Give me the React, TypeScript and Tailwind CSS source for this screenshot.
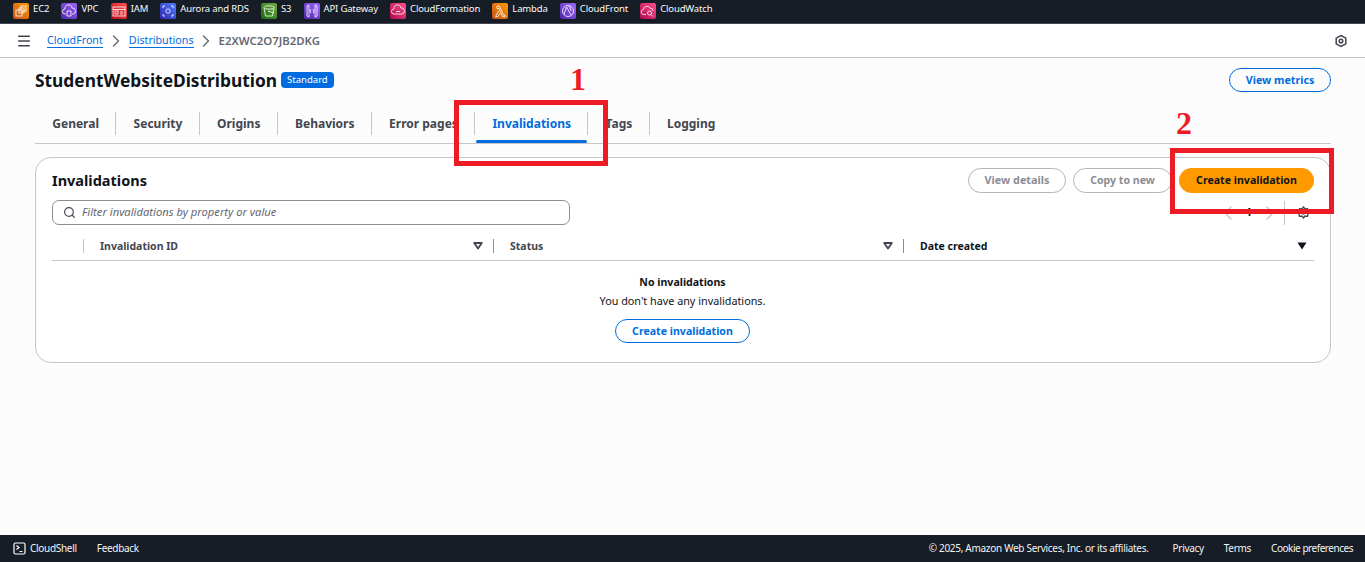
import { ChevronLeft, ChevronRight, Menu, Search } from "lucide-react";
import type { ReactNode } from "react";

const services: { name: string; bg: string; icon: ReactNode }[] = [
  {
    name: "EC2",
    bg: "bg-[linear-gradient(45deg,#c8511b,#ff9900)]",
    icon: (
      <>
        <rect x="3" y="7" width="6" height="6" />
        <rect x="6" y="5" width="5" height="5" />
        <rect x="8" y="3" width="5" height="5" />
      </>
    ),
  },
  {
    name: "VPC",
    bg: "bg-[linear-gradient(45deg,#4d27a8,#a166ff)]",
    icon: (
      <>
        <path d="M5 11H4a2.500 2.500 0 0 1 0-5 3.500 3.500 0 0 1 7-1 3 3 0 0 1 1 6h-1" />
        <path d="M6 8h4v5H6z" />
      </>
    ),
  },
  {
    name: "IAM",
    bg: "bg-[linear-gradient(45deg,#bd0816,#ff5252)]",
    icon: (
      <>
        <rect x="2" y="4" width="12" height="9" />
        <path d="M2 6.500h12" />
        <rect x="4" y="8" width="3" height="3" />
        <path d="M9 9h3M9 11h3" />
      </>
    ),
  },
  {
    name: "Aurora and RDS",
    bg: "bg-[linear-gradient(45deg,#2e27ad,#527fff)]",
    icon: (
      <>
        <rect x="6" y="6" width="4" height="4" rx="1.500" />
        <path d="M3 3h2M11 3h2M3 13h2M11 13h2M3 3v2M13 3v2M3 11v2M13 11v2" />
      </>
    ),
  },
  {
    name: "S3",
    bg: "bg-[linear-gradient(45deg,#1b660f,#6cae3e)]",
    icon: (
      <>
        <path d="M3 4.500 4.500 13h7L13 4.500" />
        <ellipse cx="8" cy="4.500" rx="5" ry="1.700" />
        <path d="m7 8 6 2" />
      </>
    ),
  },
  {
    name: "API Gateway",
    bg: "bg-[linear-gradient(45deg,#4d27a8,#a166ff)]",
    icon: <path d="M3 3v10l2 1V2zM13 3v10l-2 1V2zM7 6 6 8l1 2M9 6l1 2-1 2" />,
  },
  {
    name: "CloudFormation",
    bg: "bg-[linear-gradient(45deg,#b0084d,#ff4f8b)]",
    icon: <path d="M5 11H4a2.500 2.500 0 0 1 0-5 3.500 3.500 0 0 1 7-1 3 3 0 0 1 1 6H5zM6 8.500h4" />,
  },
  {
    name: "Lambda",
    bg: "bg-[linear-gradient(45deg,#c8511b,#ff9900)]",
    icon: <path d="M5 3h2.500l4 9H13v1.500h-2.500L7 5.500H5zM6.500 8 3.500 13.500h2.500L8 10" />,
  },
  {
    name: "CloudFront",
    bg: "bg-[linear-gradient(45deg,#4d27a8,#a166ff)]",
    icon: (
      <>
        <circle cx="8" cy="8" r="5.500" />
        <path d="M4 11.500 6.500 4M6.500 4 11 12M9.500 3 11 8" />
      </>
    ),
  },
  {
    name: "CloudWatch",
    bg: "bg-[linear-gradient(45deg,#b0084d,#ff4f8b)]",
    icon: (
      <>
        <path d="M6 11.500H4a2.500 2.500 0 0 1-.5-5A3.500 3.500 0 0 1 10 5a3 3 0 0 1 3 3" />
        <circle cx="9.500" cy="10" r="2" />
        <path d="m11 11.500 2 2" />
      </>
    ),
  },
];

const tabs = ["General", "Security", "Origins", "Behaviors", "Error pages", "Invalidations", "Tags", "Logging"];

function FilterCaret() {
  return (
    <svg width="10" height="8" viewBox="0 0 10 8" className="shrink-0">
      <path d="M1.200 1h7.600L5 6.600z" fill="none" stroke="#424650" strokeWidth="1.800" strokeLinejoin="round" />
    </svg>
  );
}

export default function App() {
  return (
    <div
      className="flex h-[562px] w-[1365px] flex-col overflow-hidden bg-[#fcfcfd] text-[12px] text-[#0f141a]"
      style={{ fontFamily: '"Noto Sans", sans-serif' }}
    >
      {/* service shortcuts */}
      <div className="flex h-6 shrink-0 items-start gap-[12.200px] border-b border-[#414750] bg-[#161d26] pl-[13px] pt-[2px]">
        {services.map((s) => (
          <div key={s.name} className="flex items-start gap-[4px] text-[9.500px] leading-[14px] tracking-[-0.15px] text-[#f9f9fa]">
            <span className={`mt-[1px] flex h-4 w-4 items-center justify-center rounded-[2px] ${s.bg}`}>
              <svg width="16" height="16" viewBox="0 0 16 16" fill="none" stroke="#fff" strokeWidth="0.9" opacity="0.9">
                {s.icon}
              </svg>
            </span>
            <span>{s.name}</span>
          </div>
        ))}
      </div>

      {/* breadcrumbs */}
      <div className="flex h-[34px] shrink-0 items-center border-b border-[#c6c6cd] bg-white pl-[16px] pr-[17px]">
        <Menu size={16} strokeWidth={2.2} className="text-[#424650]" />
        <a className="ml-[15px] border-b border-[#006ce0] text-[10.700px] leading-[14px] text-[#006ce0]">CloudFront</a>
        <ChevronRight size={20} strokeWidth={1.6} className="mx-[3px] text-[#656871]" />
        <a className="border-b border-[#006ce0] text-[10.700px] leading-[14px] text-[#006ce0]">Distributions</a>
        <ChevronRight size={20} strokeWidth={1.6} className="mx-[2.500px] text-[#656871]" />
        <span className="text-[11.400px] font-semibold text-[#656871]">E2XWC2O7JB2DKG</span>
        <svg width="14" height="14" viewBox="0 0 14 14" fill="none" stroke="#424650" className="ml-auto">
          <path d="M7 1.500 11.800 4.200v5.600L7 12.500 2.200 9.800V4.200z" strokeWidth="1.500" />
          <circle cx="7" cy="7" r="1.800" strokeWidth="1.500" />
        </svg>
      </div>

      <main className="flex-1 pl-[35px] pr-[34px]">
        <div className="flex items-center justify-between pt-[9px]">
          <div className="flex items-center gap-[4px]">
            <h1 className="text-[17.350px] leading-[26px] font-bold">StudentWebsiteDistribution</h1>
            <span className="rounded-[4px] bg-[#006ce0] px-[6px] text-[9.500px] leading-[16px] text-white">Standard</span>
          </div>
          <button className="h-6 w-[102px] rounded-full border border-[#006ce0] text-[10.700px] font-bold text-[#006ce0]">
            View metrics
          </button>
        </div>

        {/* tabs */}
        <div className="mt-[11px] flex h-[40px] border-b border-[#c6c6cd]">
          {tabs.map((tab, i) => (
            <div key={tab} className="relative flex h-[39px] items-center">
              <div
                className={`flex h-[23px] items-center border-[#c6c6cd] pl-[17.300px] pr-[16.300px] text-[12px] font-bold ${
                  i < tabs.length - 1 ? "border-r" : ""
                } ${tab === "Invalidations" ? "text-[#006ce0]" : "text-[#424650]"}`}
              >
                {tab}
              </div>
              {tab === "Invalidations" && <span className="absolute inset-x-[1px] bottom-0 h-[3px] rounded-full bg-[#006ce0]" />}
            </div>
          ))}
        </div>

        {/* card */}
        <section className="mt-[13px] h-[206px] rounded-2xl border border-[#c6c6cd] bg-white px-[16px] pt-[10px]">
          <div className="flex items-center justify-between">
            <h2 className="-translate-y-[1px] text-[14.500px] leading-6 font-bold">Invalidations</h2>
            <div className="flex items-center gap-[7px]">
              <button className="h-[25px] w-[98px] rounded-full border border-[#b4b4bb] text-[10.800px] font-bold text-[#8c8c94]">
                View details
              </button>
              <button className="h-[25px] w-[99px] rounded-full border border-[#b4b4bb] text-[10.600px] font-bold text-[#8c8c94]">
                Copy to new
              </button>
              <button className="h-[25px] w-[135px] rounded-full bg-[#ff9900] text-[10.600px] font-bold text-[#0f141a]">
                Create invalidation
              </button>
            </div>
          </div>

          <div className="mt-[7px] flex h-[25px] items-center justify-between">
            <div className="flex h-[25px] w-[518px] items-center rounded-[7px] border border-[#8c8c94] pl-[10px]">
              <Search size={13} strokeWidth={2.2} className="text-[#424650]" />
              <span className="ml-[6px] text-[11.200px] text-[#656871] italic">Filter invalidations by property or value</span>
            </div>
            <div className="flex items-center pr-[4px]">
              <ChevronLeft size={24} strokeWidth={1.3} className="text-[#c6c6cd]" />
              <span className="mx-[6px] text-[11px] font-bold text-[#0f141a]">1</span>
              <ChevronRight size={24} strokeWidth={1.3} className="text-[#c6c6cd]" />
              <span className="ml-[2px] mr-[12px] h-6 border-l border-[#c6c6cd]" />
              <svg width="13" height="13" viewBox="0 0 13 13" fill="none" stroke="#424650" strokeWidth="1.300">
                <path d="M6.500 1 8 3l2.500-.3L11 5l1 1.500-1 1.500-.500 2.300L8 10l-1.500 2L5 10l-2.500.3L2 8 1 6.500 2 5l.5-2.300L5 3z" />
                <circle cx="6.500" cy="6.500" r="1.500" />
              </svg>
            </div>
          </div>

          {/* table head */}
          <div className="mt-[7px] flex h-[29px] items-center border-b border-[#c6c6cd] text-[10.500px] font-bold">
            <div className="flex w-[32px] justify-end">
              <span className="h-[14px] border-r border-[#c6c6cd]" />
            </div>
            <div className="flex w-[409px] items-center justify-between pl-[16px] pr-[10px] text-[#424650]">
              <span className="pt-[2px]">Invalidation ID</span>
              <FilterCaret />
            </div>
            <span className="h-[14px] border-r border-[#8c8c94]" />
            <div className="flex w-[409px] items-center justify-between pl-[16px] pr-[10px] text-[#424650]">
              <span className="pt-[2px]">Status</span>
              <FilterCaret />
            </div>
            <span className="h-[14px] border-r border-[#8c8c94]" />
            <div className="flex flex-1 items-center justify-between pl-[16px] pr-[7px] text-[#0f141a]">
              <span className="pt-[2px]">Date created</span>
              <svg width="10" height="8" viewBox="0 0 10 8">
                <path d="M.5 .5h9L5 7.500z" fill="#0f141a" />
              </svg>
            </div>
          </div>

          <div className="flex flex-col items-center pr-[1px]">
            <p className="mt-[12px] text-[10.600px] leading-[18px] font-bold">No invalidations</p>
            <p className="mt-[1px] text-[10.800px] leading-[18px]">You don't have any invalidations.</p>
            <button className="mt-[9px] h-6 w-[135px] rounded-full border border-[#006ce0] pt-[1px] text-[10.600px] font-bold text-[#006ce0]">
              Create invalidation
            </button>
          </div>
        </section>
      </main>

      {/* footer */}
      <footer className="flex h-[27px] shrink-0 items-center bg-[#161d26] pl-[13px] pr-[12px] text-[10px] tracking-[-0.3px] text-[#f3f3f7]">
        <svg width="13" height="13" viewBox="0 0 13 13" fill="none" stroke="#fff" strokeWidth="1.200">
          <rect x="1" y="1" width="11" height="11" rx="1.500" />
          <path d="m3.500 3.500 2.500 2-2.500 2M6.500 9.500h3" />
        </svg>
        <span className="ml-[4px]">CloudShell</span>
        <span className="ml-[20px]">Feedback</span>
        <span className="ml-auto">© 2025, Amazon Web Services, Inc. or its affiliates.</span>
        <span className="ml-[24px]">Privacy</span>
        <span className="ml-[20px]">Terms</span>
        <span className="ml-[20px] tracking-[-0.47px]">Cookie preferences</span>
      </footer>

      {/* annotations drawn over the screenshot */}
      <div className="absolute top-[100px] left-[454px] h-[66px] w-[154px] border-[5px] border-[#ed1c24]" />
      <div className="absolute top-[148px] left-[1170px] h-[66px] w-[164px] border-[5px] border-[#ed1c24]" />
      <span
        className="absolute top-[61px] left-[570px] text-[32px] leading-9 font-bold text-[#ed1c24]"
        style={{ fontFamily: '"Liberation Serif", serif' }}
      >
        1
      </span>
      <span
        className="absolute top-[105px] left-[1176px] text-[32px] leading-9 font-bold text-[#ed1c24]"
        style={{ fontFamily: '"Liberation Serif", serif' }}
      >
        2
      </span>
    </div>
  );
}
